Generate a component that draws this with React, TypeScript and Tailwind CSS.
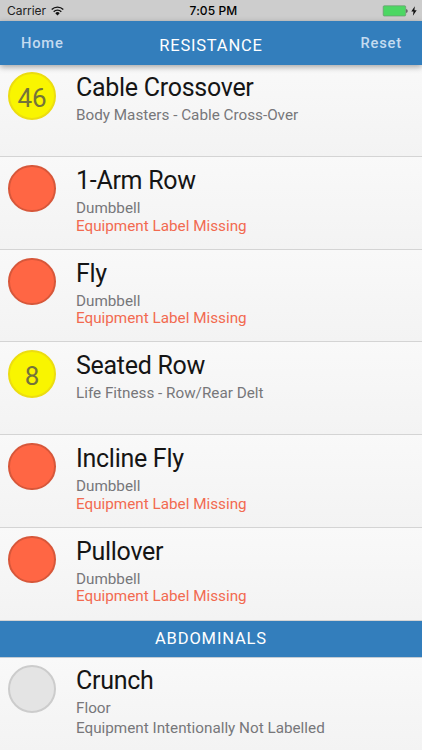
import clsx from 'clsx';

type Status = 'labelled' | 'missing' | 'none';

interface Exercise {
    name: string;
    equipment: string;
    status: Status;
    label?: string;
}

const resistance: Exercise[] = [
    {name: 'Cable Crossover', equipment: 'Body Masters - Cable Cross-Over', status: 'labelled', label: '46'},
    {name: '1-Arm Row', equipment: 'Dumbbell', status: 'missing'},
    {name: 'Fly', equipment: 'Dumbbell', status: 'missing'},
    {name: 'Seated Row', equipment: 'Life Fitness - Row/Rear Delt', status: 'labelled', label: '8'},
    {name: 'Incline Fly', equipment: 'Dumbbell', status: 'missing'},
    {name: 'Pullover', equipment: 'Dumbbell', status: 'missing'},
];

const abdominals: Exercise[] = [
    {name: 'Crunch', equipment: 'Floor', status: 'none'},
];

const StatusBar = () => (
    <div className="grid h-[21px] shrink-0 grid-cols-3 items-center bg-[#cdcdcd] pl-[7px] pr-[5px] font-['Inter',sans-serif] text-[12px] text-black">
        <div className="flex items-center gap-[5px]">
            <span className="tracking-[-0.05px] text-[#222]">Carrier</span>
            <svg width="13" height="10" viewBox="0 0 13 10" fill="none" stroke="#111" strokeWidth="1.4">
                <path d="M0.7 3.5a8.2 8.2 0 0 1 11.6 0"/>
                <path d="M2.7 5.7a5.4 5.4 0 0 1 7.6 0"/>
                <path d="M6.5 9.4 4.3 7.2a3.1 3.1 0 0 1 4.4 0z" fill="#111" stroke="none"/>
            </svg>
        </div>
        <span className="pl-[3px] text-center font-medium tracking-[0.1px]">7:05 PM</span>
        <div className="flex items-center justify-end gap-[3px]">
            <svg width="26" height="12" viewBox="0 0 26 12">
                <rect x="1.2" y="0.8" width="22.5" height="10.2" rx="1" fill="#4cd763" stroke="#6a9a70" strokeWidth="0.7"/>
                <path d="M24.4 4v4c1.5-.5 1.5-3.5 0-4z" fill="#333"/>
            </svg>
            <svg width="6" height="10" viewBox="0 0 6 10">
                <path d="M3.8 0.3 0.3 5.6h2.2L1.9 9.7 5.7 4.2H3.4z" fill="#111"/>
            </svg>
        </div>
    </div>
);

const Badge = ({status, label}: {status: Status; label?: string}) => (
    <div
        className={clsx(
            'flex h-[47.4px] w-[48px] shrink-0 items-center justify-center rounded-full border-2 pt-[5px] text-[26px] text-[#74733a]',
            status === 'labelled' && 'border-[#ecdd10] bg-[#f9f500]',
            status === 'missing' && 'border-[#d7573a] bg-[#ff6644]',
            status === 'none' && 'border-[#cccccc] bg-[#e4e4e4]',
        )}
    >
        {label}
    </div>
);

const ExerciseRow = ({exercise}: {exercise: Exercise}) => (
    <li className="flex h-[92.7px] gap-[20px] border-b border-[#d4d4d4] bg-linear-to-b from-[#f9f9f9] to-[#f3f3f3] pl-[8px] pt-[7.9px]">
        <Badge status={exercise.status} label={exercise.label}/>
        <div className="pt-px text-[15.25px] leading-[17.6px] text-[#77777a]">
            <h3 className="mb-[4px] text-[25px] leading-[30px] tracking-[-0.28px] text-[#151515]">{exercise.name}</h3>
            <p>{exercise.equipment}</p>
            {exercise.status === 'missing' && <p className="text-[#f26a50]">Equipment Label Missing</p>}
            {exercise.status === 'none' && <p className="mt-[2px]">Equipment Intentionally Not Labelled</p>}
        </div>
    </li>
);

const App = () => {
    return (
        <div className="flex h-[750px] w-[422px] flex-col overflow-hidden bg-[#f5f5f5] font-['Roboto',sans-serif]">
            <StatusBar/>
            <header className="relative z-10 grid h-[44.4px] shrink-0 grid-cols-3 items-center bg-[#337ebc] px-[21px] tracking-[0.8px] shadow-[0_2px_6px_rgba(0,0,0,0.35)]">
                <button className="text-left text-[14.7px] font-medium text-[#c4dbf0]">Home</button>
                <h1 className="pt-[6px] text-center text-[16.5px] text-white">RESISTANCE</h1>
                <button className="-mr-px text-right text-[14.7px] font-medium text-[#c4dbf0]">Reset</button>
            </header>
            <main>
                <ul className="-mt-[1px]">
                    {resistance.map((exercise) => <ExerciseRow key={exercise.name} exercise={exercise}/>)}
                </ul>
                <h2 className="flex h-[37px] items-center justify-center border-b border-[#c4ccd4] bg-[#337ebc] pt-[2px] text-[16.5px] tracking-[0.85px] text-white">
                    ABDOMINALS
                </h2>
                <ul className="[&>li:last-child]:border-b-0">
                    {abdominals.map((exercise) => <ExerciseRow key={exercise.name} exercise={exercise}/>)}
                </ul>
            </main>
        </div>
    );
};

export default App;
